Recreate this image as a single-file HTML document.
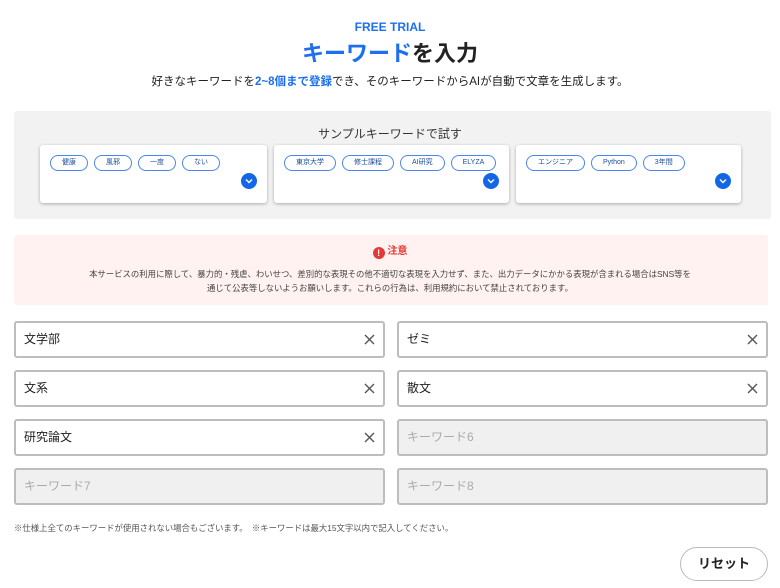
<!DOCTYPE html>
<html><head><meta charset="utf-8"><style>
*{box-sizing:border-box;margin:0;padding:0}
body{width:780px;height:588px;background:#fff;font-family:"Liberation Sans","Noto Sans CJK JP",sans-serif;color:#222;position:relative;overflow:hidden}
.abs{position:absolute}
.c{text-align:center;left:0;width:780px}
.blue{color:#1e6ff0}
.gray{left:14px;top:111px;width:757px;height:108px;background:#f2f2f2;border-radius:3px}
.card{top:145px;height:58px;background:#fff;border-radius:3px;box-shadow:0 1px 3px rgba(0,0,0,.3)}
.chips{position:absolute;left:10px;top:10px;display:flex;gap:6px}
.chip{height:16px;border:1px solid #4a86ee;border-radius:8px;font-size:7px;line-height:14px;padding:0 11px;color:#1a4fa0;background:#fff}
.chev{position:absolute;right:10px;top:28px;width:16px;height:16px;border-radius:50%;background:#1367e6}
.chev svg{position:absolute;left:4px;top:5px}
.warn{left:14px;top:235px;width:754px;height:70px;background:#fff2f1;border-radius:3px}
.in{width:371px;height:37px;border:2px solid #bdbdbd;border-radius:3px;font-size:12px;line-height:33px;padding-left:8px;background:#fff}
.in.dis{background:#f0f0f0;color:#aaa}
.x{position:absolute;right:8px;top:11px}
</style></head><body>
<div class="abs c blue" style="top:20px;font-size:12px;font-weight:bold">FREE TRIAL</div>
<div class="abs c" style="top:36px;font-size:22px;font-weight:bold"><span class="blue">キーワード</span>を入力</div>
<div class="abs c" style="top:73px;font-size:11.5px">好きなキーワードを<span class="blue" style="font-weight:bold">2~8個まで登録</span>でき、そのキーワードからAIが自動で文章を生成します。</div>
<div class="abs gray"></div>
<div class="abs c" style="top:125px;font-size:12px;color:#333">サンプルキーワードで試す</div>
<div class="abs card" style="left:40px;width:227px"><div class="chips"><span class="chip">健康</span><span class="chip">風邪</span><span class="chip">一度</span><span class="chip">ない</span></div><div class="chev"><svg width="8" height="6" viewBox="0 0 8 6"><path d="M1 1.5L4 4.5L7 1.5" stroke="#fff" stroke-width="1.4" fill="none"/></svg></div></div>
<div class="abs card" style="left:274px;width:235px"><div class="chips"><span class="chip">東京大学</span><span class="chip">修士課程</span><span class="chip">AI研究</span><span class="chip">ELYZA</span></div><div class="chev"><svg width="8" height="6" viewBox="0 0 8 6"><path d="M1 1.5L4 4.5L7 1.5" stroke="#fff" stroke-width="1.4" fill="none"/></svg></div></div>
<div class="abs card" style="left:516px;width:225px"><div class="chips"><span class="chip">エンジニア</span><span class="chip">Python</span><span class="chip">3年間</span></div><div class="chev"><svg width="8" height="6" viewBox="0 0 8 6"><path d="M1 1.5L4 4.5L7 1.5" stroke="#fff" stroke-width="1.4" fill="none"/></svg></div></div>
<div class="abs warn"></div>
<div class="abs c" style="top:242px;font-size:10px;font-weight:bold;color:#e53935"><span style="display:inline-block;width:12px;height:12px;border-radius:50%;background:#e53935;color:#fff;font-size:9px;line-height:12px;vertical-align:-2px">!</span> 注意</div>
<div class="abs c" style="top:267px;font-size:8.4px;line-height:14px;color:#444">本サービスの利用に際して、暴力的・残虐、わいせつ、差別的な表現その他不適切な表現を入力せず、また、出力データにかかる表現が含まれる場合はSNS等を<br>通じて公表等しないようお願いします。これらの行為は、利用規約において禁止されております。</div>
<div class="abs in" style="left:14px;top:321px">文学部<svg class="x" width="11" height="11" viewBox="0 0 11 11"><path d="M1 1L10 10M10 1L1 10" stroke="#555" stroke-width="1.4"/></svg></div>
<div class="abs in" style="left:397px;top:321px">ゼミ<svg class="x" width="11" height="11" viewBox="0 0 11 11"><path d="M1 1L10 10M10 1L1 10" stroke="#555" stroke-width="1.4"/></svg></div>
<div class="abs in" style="left:14px;top:370px">文系<svg class="x" width="11" height="11" viewBox="0 0 11 11"><path d="M1 1L10 10M10 1L1 10" stroke="#555" stroke-width="1.4"/></svg></div>
<div class="abs in" style="left:397px;top:370px">散文<svg class="x" width="11" height="11" viewBox="0 0 11 11"><path d="M1 1L10 10M10 1L1 10" stroke="#555" stroke-width="1.4"/></svg></div>
<div class="abs in" style="left:14px;top:419px">研究論文<svg class="x" width="11" height="11" viewBox="0 0 11 11"><path d="M1 1L10 10M10 1L1 10" stroke="#555" stroke-width="1.4"/></svg></div>
<div class="abs in dis" style="left:397px;top:419px">キーワード6</div>
<div class="abs in dis" style="left:14px;top:468px">キーワード7</div>
<div class="abs in dis" style="left:397px;top:468px">キーワード8</div>
<div class="abs" style="left:14px;top:522px;font-size:8.4px;color:#555">※仕様上全てのキーワードが使用されない場合もございます。　※キーワードは最大15文字以内で記入してください。</div>
<div class="abs" style="left:680px;top:547px;width:88px;height:34px;border:1px solid #bbb;border-radius:17px;font-size:13px;font-weight:bold;text-align:center;line-height:32px">リセット</div>
</body></html>
